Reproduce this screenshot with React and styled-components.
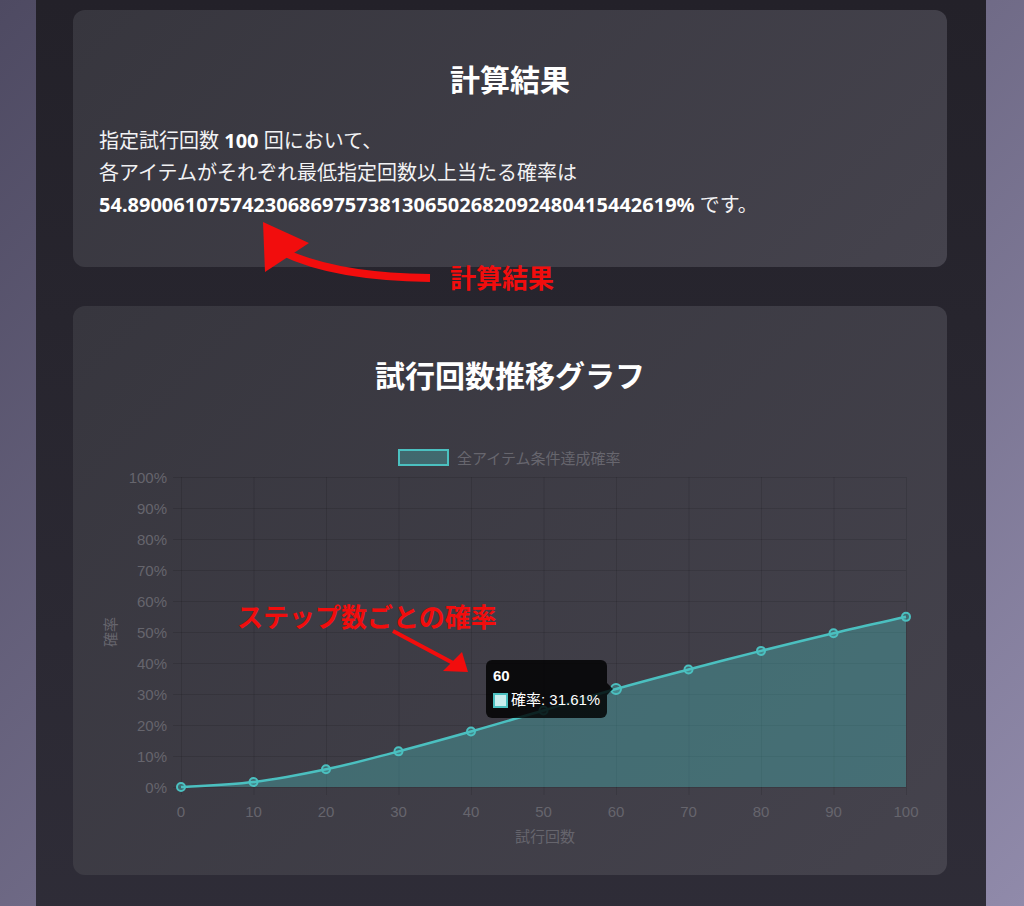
import React from 'react';
import styled, { createGlobalStyle } from 'styled-components';

const GlobalStyle = createGlobalStyle`
  html, body { margin: 0; padding: 0; height: 906px; overflow: hidden; }
  body {
    background: linear-gradient(135deg, #4e4a62 0%, #908aaa 100%);
    font-family: "Noto Sans", "Noto Sans CJK JP", sans-serif;
    color: #fff;
  }
  #root { height: 906px; }
`;

const Page = styled.div`
  position: relative;
  height: 906px;
  overflow: hidden;
`;

const Shell = styled.main`
  width: 950px;
  margin-left: 36px;
  min-height: 960px;
  box-sizing: border-box;
  padding: 10px 39px 40px 37px;
  background: linear-gradient(180deg, #232129 0%, #2f2d38 100%);
  display: flex;
  flex-direction: column;
  gap: 39px;
`;

const Card = styled.section`
  border-radius: 12px;
  padding: 48px 26px 24px;
  background: linear-gradient(135deg, #37363e 0%, #45434d 100%);
`;

const Title = styled.h2`
  margin: 0 0 ${p => p.$gap}px;
  text-align: center;
  font-size: 30px;
  line-height: 40px;
  font-weight: 700;
  font-family: "Noto Sans CJK JP", sans-serif;
  color: #fff;
`;

const Result = styled.p`
  margin: 0 0 22px;
  font-size: 20px;
  line-height: 32px;
  color: #f2f2f4;
  strong { font-weight: 700; color: #fff; }
`;

const ChartBox = styled.div`
  position: relative;
  height: 421px;
  font-family: "Liberation Sans", "Noto Sans CJK JP", sans-serif;
`;

const Tooltip = styled.div`
  position: absolute;
  left: 387px;
  top: 230px;
  width: 121px;
  box-sizing: border-box;
  padding: 7px 7px 9px;
  border-radius: 6px;
  background: rgba(0, 0, 0, 0.82);
  color: #fff;
  font-size: 15px;
  white-space: nowrap;
  &::after {
    content: "";
    position: absolute;
    right: -6px;
    top: 50%;
    margin-top: -6px;
    border-style: solid;
    border-width: 6px 0 6px 6px;
    border-color: transparent transparent transparent rgba(0, 0, 0, 0.82);
  }
`;

const TipTitle = styled.div`
  font-weight: 700;
  line-height: 18px;
  margin-bottom: 6px;
`;

const TipRow = styled.div`
  display: flex;
  align-items: center;
  line-height: 18px;
`;

const Swatch = styled.span`
  flex: none;
  width: 15px;
  height: 15px;
  box-sizing: border-box;
  border: 2px solid #4bc0c0;
  background: #c8eeee;
  margin-right: 3px;
`;

const Overlay = styled.svg`
  position: absolute;
  left: 0;
  top: 0;
  pointer-events: none;
`;

const Note = styled.div`
  position: absolute;
  left: ${p => p.$x}px;
  top: ${p => p.$y}px;
  font-family: "Noto Sans CJK JP", sans-serif;
  font-weight: 700;
  font-size: 26px;
  line-height: 32px;
  color: #f20d0d;
  white-space: nowrap;
`;

const DATA = [0, 1.6, 5.7, 11.5, 17.9, 24.7, 31.61, 37.9, 43.9, 49.6, 54.89];
const X0 = 82;
const XW = 72.5;
const Y0 = 357;
const YS = 3.1;
const TEAL = '#4bc0c0';

const pts = DATA.map((v, i) => [X0 + i * XW, Y0 - v * YS]);

function splinePath(p) {
  const k = 0.2;
  let d = `M ${p[0][0]} ${p[0][1]}`;
  for (let i = 0; i < p.length - 1; i++) {
    const p0 = p[i - 1] || p[i];
    const p1 = p[i];
    const p2 = p[i + 1];
    const p3 = p[i + 2] || p2;
    const c1 = [p1[0] + (p2[0] - p0[0]) * k, p1[1] + (p2[1] - p0[1]) * k];
    const c2 = [p2[0] - (p3[0] - p1[0]) * k, p2[1] - (p3[1] - p1[1]) * k];
    d += ` C ${c1[0]} ${c1[1]}, ${c2[0]} ${c2[1]}, ${p2[0]} ${p2[1]}`;
  }
  return d;
}

function Chart() {
  const line = splinePath(pts);
  const area = `${line} L ${pts[pts.length - 1][0]} ${Y0} L ${X0} ${Y0} Z`;
  const grid = 'rgba(0,0,0,0.11)';
  return (
    <ChartBox>
      <svg width="822" height="421">
        <rect x="300" y="20" width="49" height="15" fill="rgba(75,192,192,0.35)" stroke={TEAL} strokeWidth="2" />
        <text x="358" y="28" fontSize="15" fill="#67666e" dominantBaseline="central">全アイテム条件達成確率</text>
        {Array.from({ length: 11 }, (_, i) => (
          <line key={'h' + i} x1={X0 - 8} x2={X0 + 10 * XW} y1={47 + i * 31 + 0.5} y2={47 + i * 31 + 0.5} stroke={grid} />
        ))}
        {Array.from({ length: 11 }, (_, i) => (
          <line key={'v' + i} x1={X0 + i * XW + 0.5} x2={X0 + i * XW + 0.5} y1={47} y2={Y0 + 8} stroke={grid} />
        ))}
        <path d={area} fill="rgba(75,192,192,0.36)" />
        <path d={line} fill="none" stroke={TEAL} strokeWidth="2.5" />
        {pts.map(([x, y], i) => (
          <circle key={'p' + i} cx={x} cy={y} r={i === 6 ? 5 : 4} fill="rgba(75,192,192,0.35)" stroke={TEAL} strokeWidth="2" />
        ))}
        {Array.from({ length: 11 }, (_, i) => (
          <text key={'yl' + i} x="68" y={47 + i * 31} textAnchor="end" dominantBaseline="central" fontSize="15" fill="#66656d">
            {(100 - i * 10) + '%'}
          </text>
        ))}
        {Array.from({ length: 11 }, (_, i) => (
          <text key={'xl' + i} x={X0 + i * XW} y="381" textAnchor="middle" dominantBaseline="central" fontSize="15" fill="#66656d">
            {i * 10}
          </text>
        ))}
        <text x="446" y="406" textAnchor="middle" dominantBaseline="central" fontSize="15" fill="#66656d">試行回数</text>
        <text x="0" y="0" transform="translate(11 202) rotate(-90)" textAnchor="middle" dominantBaseline="central" fontSize="15" fill="#66656d">確率</text>
      </svg>
      <Tooltip>
        <TipTitle>60</TipTitle>
        <TipRow>
          <Swatch />
          確率: 31.61%
        </TipRow>
      </Tooltip>
    </ChartBox>
  );
}

export default function App() {
  return (
    <>
      <GlobalStyle />
      <Page>
        <Shell>
          <Card>
            <Title $gap={27}>計算結果</Title>
            <Result>
              指定試行回数 <strong>100</strong> 回において、<br />
              各アイテムがそれぞれ最低指定回数以上当たる確率は<br />
              <strong>54.890061075742306869757381306502682092480415442619%</strong> です。
            </Result>
          </Card>
          <Card>
            <Title $gap={36}>試行回数推移グラフ</Title>
            <Chart />
          </Card>
        </Shell>
        <Overlay width="1024" height="906">
          <path d="M 430 278 Q 335 277 283 252" fill="none" stroke="#f20d0d" strokeWidth="8" />
          <polygon points="263,222 265,272 309,243" fill="#f20d0d" />
          <line x1="393" y1="631" x2="453" y2="663" stroke="#f20d0d" strokeWidth="4" />
          <polygon points="468,672 443,671 462,652" fill="#f20d0d" />
        </Overlay>
        <Note $x={450} $y={261}>計算結果</Note>
        <Note $x={237} $y={600}>ステップ数ごとの確率</Note>
      </Page>
    </>
  );
}
